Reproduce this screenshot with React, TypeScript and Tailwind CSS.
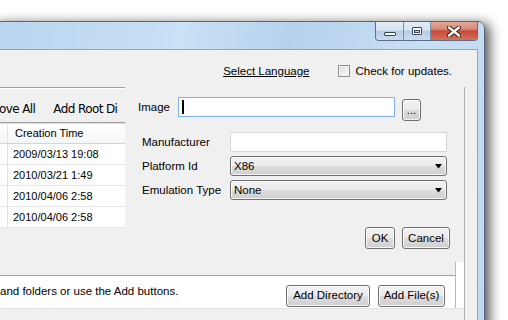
import React from "react";

const btn =
  "flex items-center justify-center rounded-[3px] border border-[#707070] bg-[linear-gradient(#f2f2f2_0%,#ebebeb_50%,#dddddd_51%,#cfcfcf_100%)] shadow-[inset_0_0_0_1px_rgba(255,255,255,0.8)] text-[11.5px] text-black";

const combo =
  "flex items-center justify-between w-[217px] h-[20px] rounded-[3px] border border-[#707070] bg-[linear-gradient(#f2f2f2_0%,#ebebeb_50%,#dddddd_51%,#cfcfcf_100%)] shadow-[inset_0_0_0_1px_rgba(255,255,255,0.8)] pl-[3px] pr-[3px] text-[11.5px]";

function Arrow() {
  return (
    <svg width="8" height="5" viewBox="0 0 8 5">
      <path d="M0 0 H7 L3.5 4.5 Z" fill="#000" />
    </svg>
  );
}

const rows = ["2009/03/13 19:08", "2010/03/21 1:49", "2010/04/06 2:58", "2010/04/06 2:58"];

export default function App() {
  return (
    <div className="relative w-[508px] h-[320px] overflow-hidden bg-white font-['Liberation_Sans',Arial,sans-serif] text-black">
      {/* window */}
      <div className="absolute left-[-8px] top-[21px] w-[493px] h-[320px] rounded-tr-[7px] border border-[#55677d] bg-[linear-gradient(100deg,#b9d4ef_0%,#cae1f6_35%,#b7d1ed_55%,#c8def4_80%,#c0d9f1_100%)] shadow-[5px_2px_12px_rgba(0,0,0,0.65)] flex flex-col pl-[7px] pr-[6px]">
        {/* title bar */}
        <div className="h-[27px] flex justify-end items-start">
          <div className="flex h-[19px] rounded-b-[4px] border border-t-0 border-[#5c6f88] overflow-hidden">
            <div className="w-[28px] flex items-center justify-center border-r border-[#7d8ea5] bg-[linear-gradient(#e3edf8_0%,#d4e2f1_45%,#b8cce2_50%,#c9daee_100%)]">
              <div className="w-[12px] h-[4px] mt-[5px] border border-[#39475a] bg-white rounded-[1px]" />
            </div>
            <div className="w-[27px] flex items-center justify-center border-r border-[#7d8ea5] bg-[linear-gradient(#e3edf8_0%,#d4e2f1_45%,#b8cce2_50%,#c9daee_100%)]">
              <div className="w-[10px] h-[8px] border border-[#39475a] bg-white rounded-[1px] flex items-center justify-center">
                <div className="w-[6px] h-[3px] mt-[1px] border border-[#39475a] bg-[#c9d6e6]" />
              </div>
            </div>
            <div className="w-[46px] flex items-center justify-center bg-[linear-gradient(#e6a797_0%,#d88a78_40%,#c54b38_50%,#d4715b_100%)]">
              <svg width="14" height="11" viewBox="0 0 14 11">
                <path d="M2 1.5 L12 9.5 M12 1.5 L2 9.5" stroke="#3f1a14" strokeWidth="4.4" strokeLinecap="round" />
                <path d="M2 1.5 L12 9.5 M12 1.5 L2 9.5" stroke="#fff" strokeWidth="2.4" strokeLinecap="round" />
              </svg>
            </div>
          </div>
        </div>

        {/* client area */}
        <div className="flex-1 bg-[#f0f0f0] border-t border-r border-[#8ea4bf] flex flex-col">
          {/* top row */}
          <div className="h-[37px] flex items-start justify-end pt-[14px] pr-[25px] text-[11.5px] leading-[14px]">
            <span className="underline mr-[29px]">Select Language</span>
            <div className="w-[12px] h-[12px] mt-[1px] border border-[#8f8f8f] bg-[linear-gradient(135deg,#dcdcdc,#fafafa)] shadow-[inset_0_0_0_1px_#f4f4f4] mr-[5px]" />
            <span>Check for updates.</span>
          </div>

          {/* tab / main area */}
          <div className="relative flex-1 w-[465px] border-r border-[#b0b0b0] flex flex-col">
            {/* list */}
            <div className="w-[125px] border-t border-[#a0a0a0]">
              <div className="h-[34px] border-t border-white pt-[13px] flex text-[12px] leading-[14px] whitespace-nowrap overflow-hidden font-['DejaVu_Sans',sans-serif] tracking-[-0.6px]">
                <span className="ml-[-1px]">ove All</span>
                <span className="ml-[18px]">Add Root Di</span>
              </div>
              <div className="h-[1px] bg-[#a0a0a0]" />
              <div className="h-[1px] bg-[#dcdcdc]" />
              <div className="bg-white text-[11px]">
                <div className="flex h-[20px] border-b border-[#d5d5d5] bg-[linear-gradient(#ffffff,#f4f5f7)]">
                  <div className="w-[8px] border-r border-[#e3e3e3]" />
                  <span className="pl-[7px] leading-[19px]">Creation Time</span>
                </div>
                {rows.map((r, i) => (
                  <div key={i} className="flex h-[21px] border-b border-[#e5e5e5]">
                    <div className="w-[8px] border-r border-[#e3e3e3]" />
                    <span className="pl-[5px] leading-[21px]">{r}</span>
                  </div>
                ))}
              </div>
            </div>

            {/* bottom strip */}
            <div className="mt-[47px] h-[34px] w-[464px] bg-white border-t border-[#a0a0a0] border-b border-b-[#e3e3e3] flex items-start pr-[19px] text-[11.5px]">
              <span className="leading-[14px] mt-[8px]">and folders or use the Add buttons.</span>
              <div className="flex-1" />
              <div className={`${btn} mt-[9px] w-[84px] h-[22px]`}>Add Directory</div>
              <div className={`${btn} mt-[9px] ml-[8px] w-[67px] h-[22px]`}>Add File(s)</div>
            </div>

            {/* white notch beside the panel */}
            <div className="absolute left-[455px] top-[175px] w-[9px] h-[46px] bg-white border-l border-[#b9b9b9]" />

            {/* overlay dialog panel */}
            <div className="absolute left-[125px] top-[-3px] w-[330px] h-[190px] bg-[#f0f0f0] rounded-tl-[6px] flex flex-col text-[11.5px] leading-[14px]">
              <div className="flex items-start pt-[13px] pl-[13px]">
                <span className="w-[40px] mt-[3px]">Image</span>
                <div className="w-[217px] h-[20px] bg-white border border-[#7eb4ea] flex items-center pl-[3px]">
                  <div className="w-[2px] h-[14px] bg-black" />
                </div>
                <div className={`${btn} ml-[7px] mt-[2px] w-[19px] h-[22px] text-[9px]`}>...</div>
              </div>
              <div className="flex items-center pl-[17px] mt-[11px]">
                <span className="w-[88px]">Manufacturer</span>
                <div className="w-[217px] h-[20px] bg-white border border-[#d7d7d7]" />
              </div>
              <div className="flex items-center pl-[17px] mt-[4px]">
                <span className="w-[88px]">Platform Id</span>
                <div className={combo}>
                  <span>X86</span>
                  <Arrow />
                </div>
              </div>
              <div className="flex items-center pl-[17px] mt-[4px]">
                <span className="w-[88px]">Emulation Type</span>
                <div className={combo}>
                  <span>None</span>
                  <Arrow />
                </div>
              </div>
              <div className="flex justify-end pr-[5px] mt-[27px]">
                <div className={`${btn} w-[30px] h-[22px] border-[#3c7fb1] shadow-[inset_0_0_0_1px_#9fd5f5]`}>OK</div>
                <div className={`${btn} ml-[7px] w-[48px] h-[22px]`}>Cancel</div>
              </div>
            </div>
          </div>
        </div>
      </div>
    </div>
  );
}
